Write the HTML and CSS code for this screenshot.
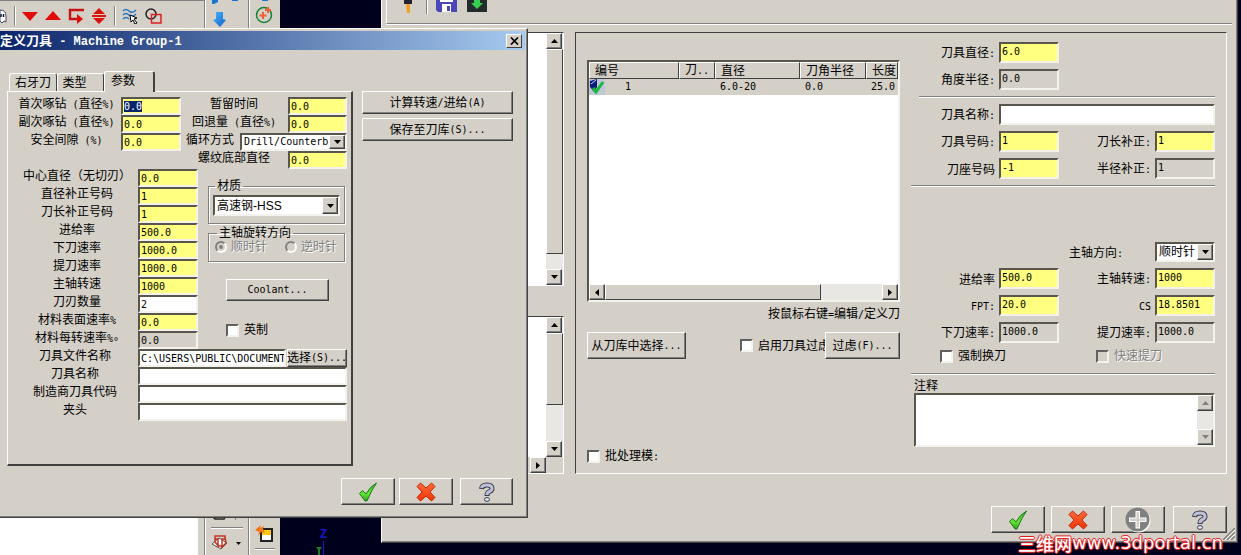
FILE: index.html
```html
<!DOCTYPE html>
<html lang="zh-CN">
<head>
<meta charset="utf-8">
<title>定义刀具 - Machine Group-1</title>
<link rel="stylesheet" href="styles.css">
</head>
<body>
<svg class="defs" width="0" height="0" aria-hidden="true">
  <defs>
    <linearGradient id="g-green" x1="0" y1="0" x2="0" y2="1"><stop offset="0" stop-color="#3fae2c"/><stop offset=".6" stop-color="#66e63a"/><stop offset="1" stop-color="#2c9a1c"/></linearGradient>
    <linearGradient id="g-red" x1="0" y1="0" x2="0" y2="1"><stop offset="0" stop-color="#ff6a3c"/><stop offset="1" stop-color="#f03404"/></linearGradient>
    <linearGradient id="g-blue" x1="0" y1="0" x2="1" y2="1"><stop offset="0" stop-color="#4ab4ff"/><stop offset="1" stop-color="#1060c8"/></linearGradient>
    <symbol id="i-check" viewBox="0 0 20 20"><path d="M1.500 11.500 L4.500 8.500 L8 12 Q12 4.500 18.500 1 Q13.500 8 9 19 L7 19 Z" fill="url(#g-green)" stroke="#1b7d14" stroke-width="1"/></symbol>
    <symbol id="i-cross" viewBox="0 0 20 20"><path d="M4.500 1 L10 6 L15.500 1 L19 4.500 L14 10 L19 15.500 L15.500 19 L10 14 L4.500 19 L1 15.500 L6 10 L1 4.500 Z" fill="url(#g-red)" stroke="#c02808" stroke-width="1" stroke-linejoin="round"/></symbol>
    <symbol id="i-help" viewBox="0 0 20 20"><g fill="none"><path d="M4.500 7 Q5 3 10 3 Q15 3 15 6.500 Q15 8.500 12.500 9.500 Q10 10.500 10 14" stroke="#3c3c50" stroke-width="5"/><path d="M4.500 6 Q5 3 10 3 Q15 3 15 6.500 Q15 8.500 12.500 9.500 Q10 10.500 10 13" stroke="#c0c0d6" stroke-width="3"/></g><ellipse cx="10" cy="17.500" rx="2.600" ry="1.900" fill="#e4e4f0" stroke="#3c3c50"/></symbol>
    <symbol id="i-plus" viewBox="0 0 26 26"><circle cx="13.500" cy="13.500" r="12" fill="#fff"/><circle cx="12.500" cy="12.500" r="12" fill="#808080"/><path d="M10.500 4H15v6.500h6.500V15H15v6.500h-4.500V15H4v-4.500h6.500z" fill="#fff"/><path d="M11.500 5H14v6.500h6.500V14H14v6.500h-2.500V14H5v-2.500h6.500z" fill="#d4d0c8"/></symbol>
    <symbol id="a-down" viewBox="0 0 7 4"><path d="M0 0H7L3.500 4Z"/></symbol>
    <symbol id="a-up" viewBox="0 0 7 4"><path d="M0 4H7L3.500 0Z"/></symbol>
    <symbol id="a-left" viewBox="0 0 4 7"><path d="M4 0V7L0 3.500Z"/></symbol>
    <symbol id="a-right" viewBox="0 0 4 7"><path d="M0 0V7L4 3.500Z"/></symbol>
  </defs>
</svg>

<div class="desktop">
  <div class="app">
    <div class="app-main">
      <div class="toolbar">
        <svg width="8" height="16" viewBox="0 0 8 16"><path d="M0 2Q6 2 6 8V14L4 13 2 15 0 13Z" fill="#fff" stroke="#446"/><path d="M1 6v3M3.500 6v3" stroke="#113" stroke-width="1.500"/></svg>
        <i class="vsep"></i>
        <svg width="16" height="16" viewBox="0 0 16 16"><path d="M0 4H16L8 13Z" fill="#e00c08"/></svg>
        <svg width="16" height="16" viewBox="0 0 16 16"><path d="M0 12H16L8 3Z" fill="#e00c08"/></svg>
        <svg width="16" height="16" viewBox="0 0 16 16"><path d="M16 2H2V11H10" fill="none" stroke="#c81414" stroke-width="2.500"/><path d="M9 6L15 11 9 16Z" fill="#e00c08"/></svg>
        <svg width="16" height="16" viewBox="0 0 16 16"><path d="M8 0L14 6H2ZM8 16L14 10H2ZM1 7H15V9H1Z" fill="#d8140c"/></svg>
        <i class="vsep"></i>
        <svg width="16" height="16" viewBox="0 0 16 16"><path d="M1 3Q4 0 7 3T14 2M1 7Q4 4 7 7T14 6M1 11Q4 8 7 11" fill="none" stroke="#2874c0" stroke-width="1.500"/><path d="M8 7L15 10 12 11 15 15 13 16 11 12 9 14Z" fill="#fff" stroke="#000"/></svg>
        <svg width="17" height="16" viewBox="0 0 17 16"><circle cx="6" cy="6" r="5" fill="none" stroke="#222" stroke-width="1.500"/><path d="M6.500 6.500H16V15H6.500Z" fill="none" stroke="#e02020" stroke-width="1.500"/></svg>
      </div>
      <div class="viewport"></div>
    </div>
    <div class="side side-a">
      <svg width="28" height="28" viewBox="0 0 28 28"><path d="M1 0H7V2L3 4H1ZM21 0H27V1H21Z" fill="#1d74d0"/><path d="M5 12H12V19L15 20 9 27 2 20 5 19Z" fill="url(#g-blue)"/></svg>
      <div class="side-end">
        <svg width="32" height="6" viewBox="0 0 32 6"><path d="M1 0L4 3H13L15 0" fill="#fff" stroke="#222" stroke-width="1.500"/><path d="M24.500 0V4" stroke="#808080"/></svg>
        <hr>
        <svg width="32" height="18" viewBox="0 0 32 18"><path d="M1 10L8 4 16 9 10 15Z" fill="#fff" stroke="#555"/><path d="M4 2H14V5H11V12H7V5H4ZM4 3V8L8 13M14 3L15 9L10 14" fill="none" stroke="#c43422" stroke-width="1.500"/><path d="M25 8H30L27.500 11Z"/></svg>
      </div>
    </div>
    <div class="side side-b">
      <svg width="18" height="28" viewBox="0 0 18 28"><path d="M7 0H13V1H7Z" fill="#1d74d0"/><circle cx="9" cy="15" r="7.500" fill="none" stroke="#168036" stroke-width="1.500"/><path d="M8 12v7M4.500 15.500h7M13 7v6M10 10h6" stroke="#f06030" stroke-width="2"/></svg>
      <div class="side-end">
        <svg width="18" height="18" viewBox="0 0 18 18"><path d="M6 4H17V16H6Z" fill="#fff" stroke="#222" stroke-width="2"/><path d="M7 5H16V10H7Z" fill="#ffc814"/><path d="M0 5L6 0 5 3 9 1 8 4 10 8 6 7 3 11 4 7Z" fill="#f07818"/></svg>
        <hr>
      </div>
    </div>
    <div class="scene">
      <div class="axis"><span>Z</span><svg width="12" height="14" viewBox="0 0 12 14"><path d="M7.500 0V14" stroke="#1818c8"/><path d="M0 6H6L4 9V14H2V9Z" fill="#1d7a2c"/></svg></div>
    </div>
  </div>

  <section class="window main-window">
    <div class="main-tools">
      <svg width="10" height="14" viewBox="0 0 10 14"><path d="M1 0H9V4H1Z" fill="#223"/><path d="M3 4H7V13H4Z" fill="#f0a020"/></svg>
      <i class="vsep"></i>
      <svg width="21" height="12" viewBox="0 0 21 12"><path d="M0 0H21V12H2L0 10Z" fill="#4a48b8"/><path d="M4 0H17V2H4ZM6 4H15V12H6Z" fill="#fff"/><path d="M11 6h3v5h-3z" fill="#4a48b8"/></svg>
      <svg width="20" height="12" viewBox="0 0 20 12"><path d="M0 0H20V12H0Z" fill="#222c2c"/><path d="M7 0H13V3H16L10 9 4 3H7Z" fill="#34d050"/></svg>
    </div>
    <div class="main-body">
      <div class="panes">
        <div class="pane pane-top">
          <div class="vscroll"><button type="button" class="sb" aria-label="上"><svg width="7" height="4"><use href="#a-up"/></svg></button><span class="thumb"></span><button type="button" class="sb" aria-label="下"><svg width="7" height="4"><use href="#a-down"/></svg></button></div>
        </div>
        <div class="pane pane-bottom">
          <div class="vscroll"><button type="button" class="sb" aria-label="上"><svg width="7" height="4"><use href="#a-up"/></svg></button><span class="thumb"></span><button type="button" class="sb" aria-label="下"><svg width="7" height="4"><use href="#a-down"/></svg></button></div>
          <div class="hscroll"><button type="button" class="sb" aria-label="右"><svg width="4" height="7"><use href="#a-right"/></svg></button></div>
        </div>
      </div>
      <div class="sheet">
        <div class="tools">
          <div class="list">
            <table>
              <colgroup><col class="c1"><col class="c2"><col class="c3"><col class="c4"><col></colgroup>
              <thead><tr><th>编号</th><th>刀<span class="en">..</span></th><th>直径</th><th>刀角半径</th><th>长度</th></tr></thead>
              <tbody><tr><td><span class="num"><svg width="16" height="16" viewBox="0 0 16 16"><path d="M0 0H16V16H0Z" fill="#c0c8d8"/><path d="M1 2L8 0V8L5 13 1 8Z" fill="#0c1c78"/><path d="M2 5L7 1" stroke="#c8d4ff"/><path d="M4 9L7 13 14 3" fill="none" stroke="#18b838" stroke-width="3"/></svg>1</span></td><td></td><td>6.0-20</td><td>0.0</td><td>25.0</td></tr></tbody>
            </table>
            <div class="hscroll"><button type="button" class="sb" aria-label="左"><svg width="4" height="7"><use href="#a-left"/></svg></button><span class="thumb"></span><button type="button" class="sb" aria-label="右"><svg width="4" height="7"><use href="#a-right"/></svg></button></div>
          </div>
          <p class="hint">按鼠标右键<span class="en">=</span>编辑<span class="en">/</span>定义刀</p>
          <div class="tool-actions">
            <button type="button" class="btn pick">从刀库中选择<span class="en">...</span></button>
            <label class="check use-filter"><input type="checkbox"><span>启用刀具过虑</span></label>
            <button type="button" class="btn filter">过虑<span class="en">(F)...</span></button>
          </div>
          <label class="check batch"><input type="checkbox"><span>批处理模<span class="en">:</span></span></label>
        </div>
        <div class="form">
          <div class="grid">
            <label for="m1">刀具直径<span class="en">:</span></label><input id="m1" class="field y" value="6.0"><i></i><i></i>
            <label for="m2">角度半径<span class="en">:</span></label><input id="m2" class="field g" value="0.0" readonly><i></i><i></i>
          </div>
          <hr class="short">
          <div class="grid">
            <label for="m3">刀具名称<span class="en">:</span></label><input id="m3" class="field span3">
            <label for="m4">刀具号码<span class="en">:</span></label><input id="m4" class="field y" value="1">
            <label for="m5">刀长补正<span class="en">:</span></label><input id="m5" class="field y" value="1">
            <label for="m6">刀座号码</label><input id="m6" class="field y" value="-1">
            <label for="m7">半径补正<span class="en">:</span></label><input id="m7" class="field g" value="1" readonly>
          </div>
          <hr>
          <div class="grid speeds">
            <label for="m8" class="dir">主轴方向<span class="en">:</span></label>
            <span class="combo"><select id="m8"><option>顺时针</option></select><span class="sb"><svg width="7" height="4"><use href="#a-down"/></svg></span></span>
            <label for="m9">进给率</label><input id="m9" class="field y" value="500.0">
            <label for="m10">主轴转速<span class="en">:</span></label><input id="m10" class="field y" value="1000">
            <label for="m11"><span class="en">FPT:</span></label><input id="m11" class="field y" value="20.0">
            <label for="m12"><span class="en">CS</span></label><input id="m12" class="field y" value="18.8501">
            <label for="m13">下刀速率<span class="en">:</span></label><input id="m13" class="field g" value="1000.0" readonly>
            <label for="m14">提刀速率<span class="en">:</span></label><input id="m14" class="field g" value="1000.0" readonly>
          </div>
          <div class="flags">
            <label class="check"><input type="checkbox"><span>强制换刀</span></label>
            <label class="check off"><input type="checkbox" disabled><span>快速提刀</span></label>
          </div>
          <hr>
          <label class="note-label" for="note">注释</label>
          <div class="note">
            <textarea id="note"></textarea>
            <div class="vscroll"><button type="button" class="sb" disabled aria-label="上"><svg width="7" height="4"><use href="#a-up"/></svg></button><button type="button" class="sb" disabled aria-label="下"><svg width="7" height="4"><use href="#a-down"/></svg></button></div>
          </div>
        </div>
      </div>
    </div>
    <div class="main-foot">
      <button type="button" class="btn icon" aria-label="确定"><svg width="20" height="20"><use href="#i-check"/></svg></button>
      <button type="button" class="btn icon" aria-label="取消"><svg width="20" height="20"><use href="#i-cross"/></svg></button>
      <button type="button" class="btn icon" disabled aria-label="添加"><svg width="26" height="26"><use href="#i-plus"/></svg></button>
      <button type="button" class="btn icon last" aria-label="帮助"><svg width="20" height="20"><use href="#i-help"/></svg></button>
    </div>
    <svg class="grip" width="12" height="12" viewBox="0 0 12 12"><path d="M0 12L12 0M4 12L12 4M8 12L12 8" stroke="#808080" stroke-width="1.500"/><path d="M2 12L12 2M6 12L12 6" stroke="#fff"/></svg>
  </section>

  <section class="window tool-window">
    <header class="title"><h1>定义刀具<span class="title-en"> - Machine Group-1</span></h1><button type="button" class="close" aria-label="关闭"><svg width="9" height="8" viewBox="0 0 9 8"><path d="M1 0.500L8 7.500M8 0.500L1 7.500" stroke="#000" stroke-width="1.700"/></svg></button></header>
    <div class="tool-body">
      <div class="tabbed">
        <nav class="tabs"><button type="button" class="tab t1">右牙刀</button><button type="button" class="tab t2">类型</button><button type="button" class="tab active">参数</button></nav>
        <div class="panel">
          <div class="top-block">
            <div class="rows peck">
              <label for="p1">首次啄钻<span class="en"> (</span>直径<span class="en">%)</span></label><input id="p1" class="field y" value="0.0">
              <label for="p2">副次啄钻<span class="en"> (</span>直径<span class="en">%)</span></label><input id="p2" class="field y" value="0.0">
              <label for="p3">安全间隙<span class="en"> (%)</span></label><input id="p3" class="field y" value="0.0">
            </div>
            <div class="rows dwell">
              <label for="p4">暂留时间</label><input id="p4" class="field y" value="0.0">
              <label for="p5">回退量<span class="en"> (</span>直径<span class="en">%)</span></label><input id="p5" class="field y" value="0.0">
              <div class="cycle"><label for="p6">循环方式</label><span class="combo"><select id="p6" class="mono"><option>Drill/Counterb</option></select><span class="sb"><svg width="7" height="4"><use href="#a-down"/></svg></span></span></div>
              <label for="p7">螺纹底部直径</label><input id="p7" class="field y" value="0.0">
            </div>
          </div>
          <div class="mid-block">
            <div class="rows params">
              <label for="q1">中心直径（无切刃）</label><input id="q1" class="field y" value="0.0">
              <label for="q2">直径补正号码</label><input id="q2" class="field y" value="1">
              <label for="q3">刀长补正号码</label><input id="q3" class="field y" value="1">
              <label for="q4">进给率</label><input id="q4" class="field y" value="500.0">
              <label for="q5">下刀速率</label><input id="q5" class="field y" value="1000.0">
              <label for="q6">提刀速率</label><input id="q6" class="field y" value="1000.0">
              <label for="q7">主轴转速</label><input id="q7" class="field y" value="1000">
              <label for="q8">刀刃数量</label><input id="q8" class="field" value="2">
              <label for="q9">材料表面速率<span class="en">%</span></label><input id="q9" class="field y" value="0.0">
              <label for="q10">材料每转速率<span class="en">%∘</span></label><input id="q10" class="field g" value="0.0" readonly>
            </div>
            <div class="extras">
              <fieldset class="material"><legend>材质</legend><span class="combo"><select aria-label="材质"><option>高速钢-HSS</option></select><span class="sb"><svg width="7" height="4"><use href="#a-down"/></svg></span></span></fieldset>
              <fieldset class="spin"><legend>主轴旋转方向</legend><label class="radio"><input type="radio" name="spin" checked disabled><span>顺时针</span></label><label class="radio"><input type="radio" name="spin" disabled><span>逆时针</span></label></fieldset>
              <button type="button" class="btn coolant"><span class="en">Coolant...</span></button>
              <label class="check inch"><input type="checkbox"><span>英制</span></label>
            </div>
          </div>
          <div class="rows files">
            <label for="f1">刀具文件名称</label><div class="file"><input id="f1" class="field" value="C:\USERS\PUBLIC\DOCUMENT"><button type="button" class="btn">选择<span class="en">(S)...</span></button></div>
            <label for="f2">刀具名称</label><input id="f2" class="field">
            <label for="f3">制造商刀具代码</label><input id="f3" class="field">
            <label for="f4">夹头</label><input id="f4" class="field">
          </div>
        </div>
      </div>
      <div class="actions">
        <button type="button" class="btn">计算转速<span class="en">/</span>进给<span class="en">(A)</span></button>
        <button type="button" class="btn">保存至刀库<span class="en">(S)...</span></button>
      </div>
    </div>
    <div class="tool-foot">
      <button type="button" class="btn icon" aria-label="确定"><svg width="20" height="20"><use href="#i-check"/></svg></button>
      <button type="button" class="btn icon" aria-label="取消"><svg width="20" height="20"><use href="#i-cross"/></svg></button>
      <button type="button" class="btn icon last" aria-label="帮助"><svg width="20" height="20"><use href="#i-help"/></svg></button>
    </div>
  </section>
  <div class="watermark"><span>三维网</span>www.3dportal.cn</div>
</div>
<script>
  document.getElementById('p1').select();
</script>
</body>
</html>
```

FILE: styles.css
```css
:root {
  --face: #d4d0c8;
  --dark: #404040;
  --shade: #808080;
  --yellow: #ffff80;
  --mono: "DejaVu Sans Mono", "Noto Sans CJK SC", monospace;
}
* { box-sizing: border-box; }
body {
  margin: 0;
  background: #00001c;
  font: 12px/14px "Liberation Sans", "Noto Sans CJK SC", sans-serif;
  color: #000;
}
button, input, select, textarea { font: inherit; color: inherit; margin: 0; border-radius: 0; }
input::selection { background: #0a246a; color: #fff; }
svg { display: block; flex: none; }
.defs { position: absolute; }
.en { font: 10px/14px var(--mono); white-space: pre; }
.desktop { position: relative; height: 100vh; overflow: hidden; }

/* application behind the dialogs */
.app { display: flex; height: 100%; }
.app-main { width: 204px; display: flex; flex-direction: column; background: var(--face); }
.toolbar { height: 29px; display: flex; align-items: center; gap: 7px; padding-top: 2px; border-top: 1px solid var(--shade); }
.toolbar svg:first-child { margin-right: -1px; }
.toolbar svg { margin-right: 0; }
.vsep { width: 2px; height: 20px; border-left: 1px solid var(--shade); border-right: 1px solid #fff; flex: none; }
.toolbar .vsep { margin-right: -1px; }
.viewport { flex: 1; margin-right: 6px; background: #fff; }
.side { display: flex; flex-direction: column; justify-content: space-between; background: var(--face); border-left: 1px solid var(--shade); box-shadow: inset 1px 0 #fff; }
.side-a { width: 44px; padding-left: 6px; }
.side-b { width: 32px; padding-left: 6px; }
.side hr { margin: 5px 0; width: 20px; border: 0; border-top: 1px solid var(--shade); border-bottom: 1px solid #fff; }
.side-a hr { width: 32px; margin: 5px 0; }
.side-a .side-end { padding-bottom: 3px; }
.scene { flex: 1; display: flex; align-items: flex-end; padding-left: 36px; }
.axis { font: bold 12px/12px "Liberation Mono", monospace; color: #1818c8; }
.axis span { padding-left: 4px; }

/* window frames */
.window { position: absolute; background: var(--face); border: 1px solid; border-color: #fff var(--dark) var(--dark) #fff; box-shadow: inset -1px -1px var(--shade); }
.main-window { left: 381px; right: 3px; top: -2px; padding: 0 10px 9px 4px; }
.tool-window { left: 0; top: 28px; width: 528px; border-left: 0; padding: 2px 2px 12px 0; }

.btn { display: inline-flex; align-items: center; justify-content: center; padding: 0; background: var(--face); border: 1px solid; border-color: #fff var(--dark) var(--dark) #fff; box-shadow: inset -1px -1px var(--shade); white-space: nowrap; }
.icon { width: 54px; height: 27px; }
.sb { width: 16px; height: 16px; display: flex; align-items: center; justify-content: center; padding: 0; flex: none; background: var(--face); border: 1px solid; border-color: #fff var(--dark) var(--dark) #fff; box-shadow: inset -1px -1px var(--shade); }
.sb:disabled { fill: var(--shade); }
.field { width: 100%; min-width: 0; height: 18px; padding: 1px 0 0 1px; font: 10px/13px var(--mono); background: #fff; border: 2px solid; border-color: #58564c #f4f2ec #f4f2ec #58564c; outline: 0; }
.y { background: var(--yellow); }
.g { background: var(--face); }
.combo { display: grid; min-width: 0; height: 21px; text-align: left; border: 2px solid; border-color: #58564c #f4f2ec #f4f2ec #58564c; background: #fff; }
.combo > * { grid-area: 1 / 1; }
.combo select { appearance: none; width: 100%; min-width: 0; border: 0; padding: 0 16px 0 2px; background: none; outline: 0; }
.combo .sb { justify-self: end; height: 100%; pointer-events: none; }
.combo .mono { font: 10px/14px var(--mono); }
.check, .radio { display: flex; align-items: center; white-space: nowrap; }
.check { gap: 5px; }
.check input { appearance: none; width: 13px; height: 13px; flex: none; background: #fff; border: 2px solid; border-color: #606060 #f4f2ec #f4f2ec #606060; }
.off input { background: var(--face); }
.off span, .radio span { color: var(--shade); text-shadow: 1px 1px #fff; }
.radio { gap: 4px; }
.radio input { appearance: none; width: 12px; height: 12px; border-radius: 50%; border: 2px solid; border-color: var(--shade) #fff #fff var(--shade); display: grid; place-items: center; }
.radio input:checked::before { content: ""; width: 4px; height: 4px; border-radius: 50%; background: var(--shade); }

/* tool definition dialog */
.title { display: flex; align-items: center; height: 19px; padding-right: 3px; background: linear-gradient(90deg, #0a246a, #a6caf0); color: #fff; }
.title h1 { flex: 1; margin: 0; font: bold 13px/18px "Noto Sans CJK SC", sans-serif; }
.title-en { font: bold 12px/18px "Liberation Mono", monospace; white-space: pre; }
.close { width: 16px; height: 14px; display: grid; place-items: center; padding: 0; background: var(--face); border: 1px solid; border-color: #fff var(--dark) var(--dark) #fff; }
.tool-body { display: flex; gap: 9px; padding: 21px 12px 0 7px; }
.tabbed { flex: 1; min-width: 0; }
.tabs { display: flex; align-items: flex-end; padding-left: 2px; }
.tab { height: 18px; padding: 0; background: var(--face); border: 1px solid; border-color: #fff var(--dark) transparent #fff; border-radius: 3px 3px 0 0; border-bottom: 0; }
.t1 { width: 48px; }
.t2 { width: 47px; padding-right: 12px; }
.active { width: 51px; height: 21px; padding: 0 12px 2px 0; margin-bottom: -1px; border-right-width: 2px; }
.panel { border: 1px solid; border-color: #fff var(--dark) var(--dark) #fff; border-right-width: 2px; border-bottom-width: 2px; padding: 5px 4px 43px 8px; }
.top-block, .mid-block { display: flex; justify-content: space-between; }
.rows { display: grid; grid-auto-rows: 18px; align-content: start; text-align: center; white-space: nowrap; }
.peck { grid-template-columns: 105px 60px; }
.peck label { padding-right: 4px; }
.dwell { grid-template-columns: 102px 59px; }
.dwell > label { padding-right: 6px; }
.cycle { grid-column: 1 / -1; display: flex; gap: 6px; }
.cycle .combo { flex: 1; height: 18px; }
.params { grid-template-columns: 122px 60px; }
.files { grid-template-columns: 122px 1fr; }
.files > label { padding-right: 4px; }
.file { display: flex; gap: 1px; }
.file .field { flex: 1; }
.file .btn { width: 60px; height: 18px; }
.extras { width: 139px; padding-top: 10px; display: flex; flex-direction: column; align-items: flex-start; }
fieldset { width: 137px; min-width: 0; margin: 0; padding: 0 4px 5px; border: 1px solid var(--shade); box-shadow: 1px 1px #fff, inset 1px 1px #fff; }
legend { padding: 0 2px; margin-left: 2px; line-height: 14px; height: 14px; }
.material { height: 45px; }
.material .combo { margin-top: 2px; }
.spin { display: flex; gap: 18px; height: 36px; margin-top: 2px; padding: 0 6px 4px; }
.coolant { width: 103px; height: 22px; margin: 17px 0 0 18px; }
.inch { margin: 22px 0 0 18px; }
.actions { width: 151px; padding-top: 20px; display: flex; flex-direction: column; gap: 4px; }
.actions .btn { height: 23px; }
.tool-foot { display: flex; justify-content: flex-end; gap: 4px; padding: 12px 12px 0 0; }
.tool-foot .last { margin-left: 3px; width: 53px; }

/* tool list dialog */
.main-tools { display: flex; align-items: flex-start; height: 25px; margin-right: -5px; padding: 1px 0 0 16px; border-left: 1px solid #fff; border-bottom: 1px solid var(--shade); box-shadow: 0 1px #fff; }
.main-tools .vsep { height: 14px; margin: 0 8px 0 13px; }
.main-tools svg:last-child { margin-left: 10px; }
.main-body { display: flex; gap: 11px; padding: 8px 0 0; }
.panes { width: 178px; display: flex; flex-direction: column; justify-content: space-between; }
.pane { background: #fff; border: 1px solid; border-color: var(--dark) #fff #fff var(--dark); display: flex; flex-direction: column; align-items: flex-end; }
.pane-top { height: 254px; }
.pane-bottom { height: 158px; }
.vscroll { flex: 1; width: 17px; display: flex; flex-direction: column; justify-content: space-between; background: #e9e7e3; }
.vscroll .thumb { flex: 1; margin-bottom: 15px; }
.pane-bottom .thumb { margin-bottom: 36px; }
.hscroll { display: flex; height: 16px; background: #e9e7e3; }
.thumb { background: var(--face); border: 1px solid; border-color: #fff var(--dark) var(--dark) #fff; }
.pane-bottom .hscroll { align-self: stretch; justify-content: flex-end; padding-right: 17px; background: var(--face); }
.sheet { flex: 1; min-width: 0; display: flex; gap: 11px; padding: 0 11px; border: 1px solid; border-color: var(--dark) #fff #fff var(--dark); }
.tools { flex: 1; min-width: 0; display: flex; flex-direction: column; padding: 27px 0 9px; }
.list { height: 242px; display: flex; flex-direction: column; justify-content: space-between; overflow: hidden; background: #fff; border: 2px solid; border-color: #58564c #f4f2ec #f4f2ec #58564c; }
table { width: 100%; table-layout: fixed; border-collapse: separate; border-spacing: 0; }
.c1 { width: 90px; } .c2 { width: 36px; } .c3 { width: 85px; } .c4 { width: 66px; }
th { height: 16px; padding: 0 0 0 5px; text-align: left; font-weight: normal; white-space: nowrap; overflow: hidden; background: var(--face); border: 1px solid; border-color: #fff var(--dark) var(--dark) #fff; }
td { height: 16px; padding: 0 0 0 5px; font: 10px/16px var(--mono); background: var(--face); }
td:first-child { padding: 0; }
.num { display: flex; gap: 20px; }
.list .hscroll .thumb { flex: 1; margin-right: 61px; }
.hint { margin: 5px 0 0; text-align: right; white-space: nowrap; }
.tool-actions { display: flex; justify-content: flex-end; padding-top: 10px; }
.pick { width: 99px; height: 27px; margin-right: auto; }
.filter { width: 75px; height: 27px; }
.use-filter { width: 85px; }
.batch { margin-top: auto; }
.form { width: 304px; padding: 9px 0 26px; }
.grid { display: grid; grid-template-columns: 84px 60px 88px 60px; column-gap: 4px; row-gap: 6px; align-items: center; text-align: right; white-space: nowrap; }
.grid .field { height: 21px; padding: 0 0 2px 1px; }
.grid label { padding-top: 2px; }
.grid .combo { height: 20px; }
.span3 { grid-column: span 3; }
.form hr { margin: 6px 0; border: 0; border-top: 1px solid var(--shade); border-bottom: 1px solid #fff; }
.form .short { margin-left: 8px; }
.speeds { padding-top: 49px; }
.speeds .dir { grid-column: 3; padding-right: 28px; }
.flags { display: grid; grid-template-columns: 156px 1fr; padding: 6px 0 4px 29px; }
.note-label { display: block; padding-left: 3px; margin-top: -2px; }
.note { display: flex; height: 54px; margin: 0 0 0 3px; background: #fff; border: 2px solid; border-color: #58564c #f4f2ec #f4f2ec #58564c; }
.note textarea { flex: 1; min-width: 0; border: 0; padding: 1px; resize: none; background: none; outline: 0; }
.note .vscroll { flex: none; width: 16px; }
.main-foot { display: flex; justify-content: flex-end; gap: 6px; padding-top: 32px; }
.main-foot .last { margin-left: 2px; }
.grip { position: absolute; right: 2px; bottom: 2px; }

.watermark { position: absolute; right: 18px; bottom: 1px; display: flex; font: 18px/22px "DejaVu Sans", "Noto Sans CJK SC", sans-serif; color: #fff; white-space: nowrap; text-shadow: 1px 0 #e02020, -1px 0 #e02020, 0 1px #e02020, 0 -1px #e02020, 0 0 2px #f08080; }
.watermark span { font: 500 18px/22px "Noto Sans CJK SC", sans-serif; }
```
